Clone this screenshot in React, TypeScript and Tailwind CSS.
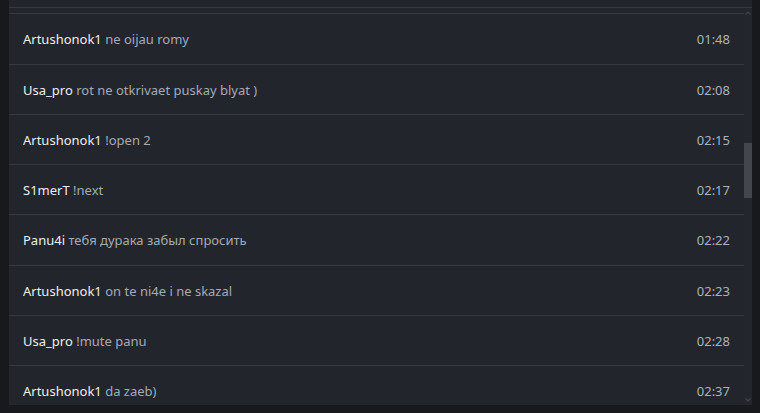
import React from "react";

const rows = [
  { name: "Artushonok1", msg: "ne oijau romy", time: "01:48", h: "h-[51px]" },
  { name: "Usa_pro", msg: "rot ne otkrivaet puskay blyat )", time: "02:08", h: "h-[50px]" },
  { name: "Artushonok1", msg: "!open 2", time: "02:15", h: "h-[50px]" },
  { name: "S1merT", msg: "!next", time: "02:17", h: "h-[50px]" },
  { name: "Panu4i", msg: "тебя дурака забыл спросить", time: "02:22", h: "h-[51px]" },
  { name: "Artushonok1", msg: "on te ni4e i ne skazal", time: "02:23", h: "h-[50px]" },
  { name: "Usa_pro", msg: "!mute panu", time: "02:28", h: "h-[50px]" },
  { name: "Artushonok1", msg: "da zaeb)", time: "02:37", h: "h-[50px]" },
];

export default function App() {
  return (
    <div
      className="w-[760px] h-[413px] bg-[#18191c] overflow-hidden flex"
      style={{ fontFamily: '"Noto Sans", "Open Sans", sans-serif' }}
    >
      <div className="ml-[9px] w-[743px] h-[405px] bg-[#22252c] flex flex-col">
        <div className="h-[8px] shrink-0 border-b border-[#363942]" />
        <div className="flex flex-1 min-h-0">
          <div className="w-[735px] overflow-hidden pt-[5px]">
            {rows.map((r, i) => (
              <div
                key={i}
                className={`${r.h} border-t border-[#363942] flex items-center justify-between pl-[14px] pr-[14px] pt-[2px] text-[13px]`}
              >
                <div className="whitespace-nowrap">
                  <span className="text-[#eceef0]">{r.name}</span>{" "}
                  <span className="text-[#a3abb7]">{r.msg}</span>
                </div>
                <span className="text-[#a9b3c0]">{r.time}</span>
              </div>
            ))}
          </div>
          <div className="w-[8px] bg-[#23262d] relative flex flex-col items-center">
            <svg width="6" height="4" viewBox="0 0 6 4" className="mt-[3px]">
              <path d="M0.5 3.5 L3 1 L5.5 3.5" stroke="#3f434b" strokeWidth="1.2" fill="none" />
            </svg>
            <div className="absolute left-0 top-[135px] w-[8px] h-[55px] bg-[#43464d]" />
            <svg width="6" height="4" viewBox="0 0 6 4" className="mt-auto mb-[3px]">
              <path d="M0.5 0.5 L3 3 L5.5 0.5" stroke="#3f434b" strokeWidth="1.2" fill="none" />
            </svg>
          </div>
        </div>
      </div>
    </div>
  );
}
